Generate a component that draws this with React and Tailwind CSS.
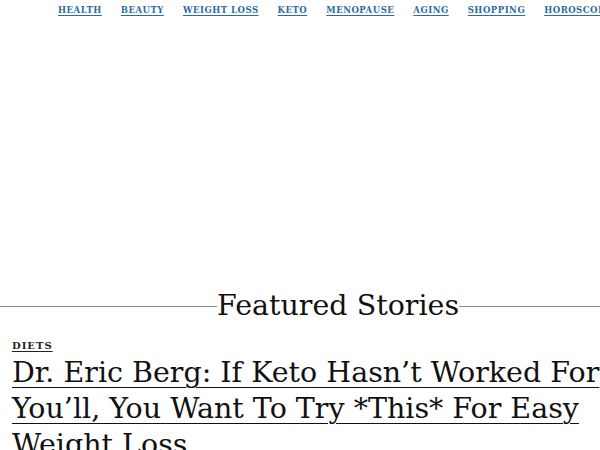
const NAV = ["Health", "Beauty", "Weight Loss", "Keto", "Menopause", "Aging", "Shopping", "Horoscopes"];

export default function App() {
  return (
    <div className="w-[600px] h-[450px] overflow-hidden bg-white font-['DejaVu_Serif',serif]">
      <div className="w-[676px]">
        {/* Top nav */}
        <nav className="flex gap-[19px] pt-[4px] pl-[58px] h-[20px] whitespace-nowrap">
          {NAV.map((n) => (
            <a
              key={n}
              href="#"
              className="text-[8.5px] font-bold uppercase tracking-[0.06em] text-[#2b6ca3] underline underline-offset-2"
            >
              {n}
            </a>
          ))}
        </nav>

        {/* Ad space */}
        <div className="h-[268px]" />

        {/* Featured heading */}
        <div className="flex items-center">
          <div className="flex-1 h-px bg-[#8a8a8a]" />
          <h2 className="text-[28.5px] leading-[36px] text-[#111]">Featured Stories</h2>
          <div className="flex-1 h-px bg-[#8a8a8a]" />
        </div>

        {/* Story */}
        <div className="px-[12px] pt-[14px]">
          <a href="#" className="block text-[10px] font-bold tracking-[0.1em] text-[#222] underline underline-offset-2">
            DIETS
          </a>
          <a href="#" className="block mt-[2px] text-[28.5px] leading-[36px] text-[#111] underline underline-offset-[5px] decoration-1">
            Dr. Eric Berg: If Keto Hasn’t Worked For You’ll, You Want To Try *This* For Easy Weight Loss
          </a>
        </div>
      </div>
    </div>
  );
}
